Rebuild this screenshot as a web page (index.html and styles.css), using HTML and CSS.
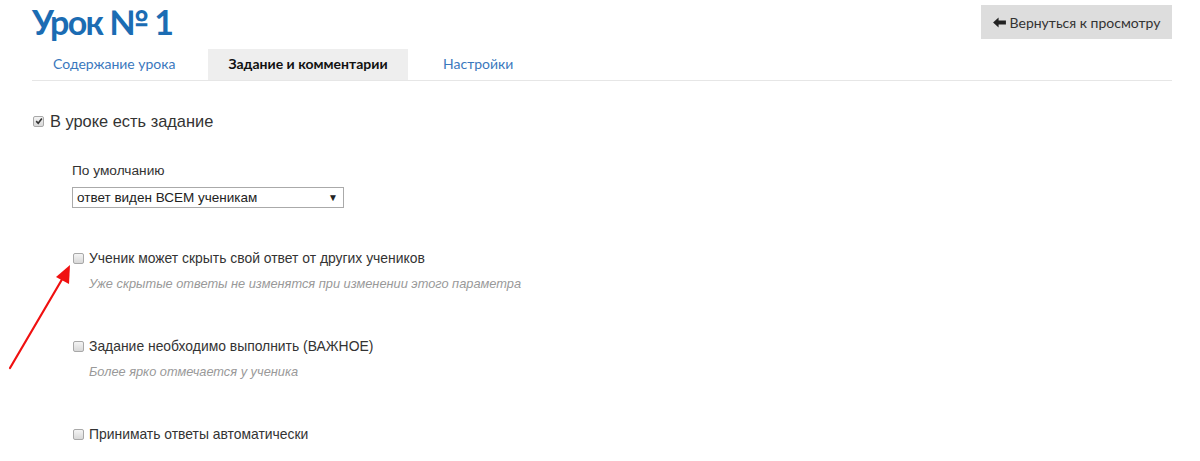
FILE: index.html
```html
<!DOCTYPE html>
<html lang="ru">
<head>
<meta charset="utf-8">
<link rel="stylesheet" href="styles.css">
</head>
<body>
<div class="page">
  <header class="head">
    <h1 class="title">Урок № 1</h1>
    <button class="back"><svg class="back-ico" viewBox="0 0 14 12" width="13" height="11"><path d="M0 6 L6 0.5 L6 3.8 L14 3.8 L14 8.2 L6 8.2 L6 11.5 Z" fill="#222"/></svg>Вернуться к просмотру</button>
  </header>
  <nav class="tabs">
    <a class="tab">Содержание урока</a>
    <a class="tab active">Задание и комментарии</a>
    <a class="tab">Настройки</a>
  </nav>
  <div class="main-check">
    <span class="cb checked"><svg viewBox="0 0 10 10" width="8" height="8"><path d="M1.5 5.2 L4 7.8 L8.6 1.8" stroke="#333" stroke-width="2" fill="none"/></svg></span>
    <span>В уроке есть задание</span>
  </div>
  <div class="opts">
    <div class="field">
      <div class="field-label">По умолчанию</div>
      <div class="select"><span>ответ виден ВСЕМ ученикам</span><span class="caret">▼</span></div>
    </div>
    <div class="opt">
      <div class="opt-row"><span class="cb"></span><span>Ученик может скрыть свой ответ от других учеников</span></div>
      <div class="help">Уже скрытые ответы не изменятся при изменении этого параметра</div>
    </div>
    <div class="opt">
      <div class="opt-row"><span class="cb"></span><span>Задание необходимо выполнить (ВАЖНОЕ)</span></div>
      <div class="help">Более ярко отмечается у ученика</div>
    </div>
    <div class="opt last">
      <div class="opt-row"><span class="cb"></span><span>Принимать ответы автоматически</span></div>
    </div>
  </div>
  <svg class="arrow" width="80" height="120" viewBox="0 0 80 120">
    <line x1="10" y1="118" x2="64" y2="26" stroke="#f01010" stroke-width="2.2" stroke-linecap="round"/>
    <path d="M70 15 L69 34 L56 27 Z" fill="#f01010"/>
  </svg>
</div>
</body>
</html>
```
FILE: styles.css
```css
* { box-sizing: border-box; }
html, body { margin: 0; padding: 0; background: #fff; }
body {
  font-family: "Liberation Sans", Arial, sans-serif;
  color: #333;
  width: 1200px;
  height: 461px;
  overflow: hidden;
}
.page { position: relative; padding: 0 28px 0 32px; height: 461px; }
.head {
  display: flex;
  justify-content: space-between;
  align-items: flex-start;
  height: 49px;
}
.title {
  margin: 0;
  padding-top: 2px;
  font-family: "Lato", "Open Sans", sans-serif;
  font-size: 34px;
  line-height: 40px;
  font-weight: 700;
  color: #1b6cb3;
  letter-spacing: -1.6px;
}
.back {
  margin-top: 5px;
  height: 34px;
  width: 191px;
  border: none;
  background: #ddd;
  color: #333;
  font-family: "Lato", "Open Sans", sans-serif;
  font-size: 14px;
  display: flex;
  align-items: center;
  justify-content: center;
  gap: 4px;
  padding: 0;
}
.tabs {
  display: flex;
  border-bottom: 1px solid #e6e6e6;
  height: 32px;
  font-family: "Lato", "Open Sans", sans-serif;
}
.tab {
  display: flex;
  align-items: center;
  height: 31px;
  padding-bottom: 2px;
  font-size: 14px;
  color: #3a78bd;
}
.tab:nth-child(1) { width: 176px; padding-left: 21px; }
.tab:nth-child(2) { width: 200px; justify-content: center; }
.tab:nth-child(3) { width: 172px; padding-left: 35px; }
.tab.active { background: #eee; color: #111; font-weight: 700; }
.main-check {
  display: flex;
  align-items: center;
  gap: 6px;
  margin-top: 30px;
  font-size: 16.4px;
  color: #333;
  height: 20px;
}
.cb {
  display: inline-flex;
  align-items: center;
  justify-content: center;
  width: 11px;
  height: 11px;
  border: 1px solid #a8a8a8;
  border-radius: 2px;
  background: linear-gradient(#f4f4f4, #d8d8d8);
  flex: none;
}
.cb.checked { margin-left: 1px; }
.opts { padding-left: 40px; }
.field { margin-top: 32px; }
.field-label { font-size: 13.7px; line-height: 16px; color: #333; }
.select {
  margin-top: 8px;
  width: 272px;
  height: 21px;
  border: 1px solid #aaa;
  display: flex;
  align-items: center;
  justify-content: space-between;
  padding: 0 5px 0 4px;
  font-size: 13.5px;
  color: #222;
}
.caret { font-size: 10px; color: #222; }
.opt { height: 88px; }
.opt.last { height: auto; }
.field + .opt { margin-top: 42px; }
.opt-row {
  display: flex;
  align-items: center;
  gap: 5px;
  font-size: 13.9px;
  height: 16px;
  color: #333;
}
.opt-row .cb { margin-left: 1px; width: 11px; height: 11px; }
.help {
  margin-top: 10px;
  padding-left: 17px;
  font-size: 12.8px;
  font-style: italic;
  color: #999;
}
.arrow { position: absolute; left: 0; top: 250px; }
```
